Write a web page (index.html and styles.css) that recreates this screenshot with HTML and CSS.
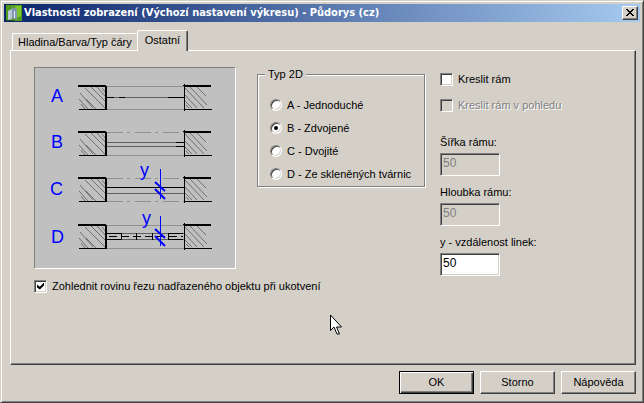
FILE: index.html
```html
<!DOCTYPE html>
<html lang="cs">
<head>
  <meta charset="UTF-8" />
  <meta name="viewport" content="width=device-width, initial-scale=1.0" />
  <title>Vlastnosti zobrazení</title>
  <link rel="stylesheet" href="styles.css">
</head>
<body>
<form class="window">
  <header class="titlebar">
    <svg class="app-icon" viewBox="0 0 16 16" width="16" height="16" aria-hidden="true">
      <rect width="16" height="16" fill="#4f9a1c"/>
      <path d="M9 1h6v10l-4 2z" fill="#7cc62c"/>
      <path d="M2 6l4-2v10l-4 1z" fill="#b9c9da"/>
      <path d="M6 2l5 2v11l-5-2z" fill="#7f95ad"/>
      <path d="M8 6l1 .5v7L8 13z" fill="#e4edf4"/>
      <path d="M0 15h6l4 1H0z" fill="#24502a"/>
    </svg>
    <h1>Vlastnosti zobrazení (Výchozí nastavení výkresu) - Půdorys (cz)</h1>
    <button type="button" class="close" aria-label="Zavřít">
      <svg viewBox="0 0 8 7" width="8" height="7" shape-rendering="crispEdges"><path d="M0 0h2v1h1v1h2V1h1V0h2v1H7v1H6v1H5v1h1v1h1v1h1v1H6V6H5V5H3v1H2v1H0V6h1V5h1V4h1V3H2V2H1V1H0z"/></svg>
    </button>
  </header>

  <nav class="tabs" role="tablist">
    <button type="button" class="tab" role="tab" aria-selected="false">Hladina/Barva/Typ čáry</button>
    <button type="button" class="tab active" role="tab" aria-selected="true">Ostatní</button>
  </nav>

  <main class="panel" role="tabpanel">
    <svg class="preview" viewBox="0 0 200 200" width="200" height="200" role="img" aria-label="Typy 2D zobrazení">
      <defs>
        <!-- cut wall on both sides of the opening -->
        <g id="hatchLeft" class="hatch">
          <path d="M45 7l13 15M44 13l9 10M46 18l4 5M50 2l20 20M56 1l15 15M62 1l9 10M67 2l4 5M51 13l10 10"/>
        </g>
        <g id="hatchRight" class="hatch">
          <path d="M150 2l19 20M150 9l12 13M150 15l7 7M155 1l17 18M162 1l9 9M151 19l3 3"/>
        </g>
        <g id="walls">
          <use href="#hatchLeft"/>
          <use href="#hatchRight"/>
          <path class="ink thick" d="M43 0h28M148 0h28"/>
          <path class="ink" d="M44 23.500h28M148 23.500h29"/>
          <path class="ink thick" d="M71 0v24"/>
          <path class="ink" d="M149.500 -2v27"/>
        </g>
        <g id="dimension" class="dim">
          <path d="M125.500 0v30" />
          <path class="tick" d="M120 13l10 9M120 20l10 10"/>
        </g>
      </defs>

      <use href="#walls" y="18"/>
      <path class="faint" d="M72 18.500h77M72 41.500h77"/>
      <path class="gray" d="M72 29.500h77"/>
      <path class="ink" d="M72 29.500h7M84 29.500h6M133 29.500h16"/>

      <use href="#walls" y="64"/>
      <path class="faint dashed" d="M72 64.500h77"/>
      <path class="faint" d="M72 87.500h77"/>
      <path class="gray" d="M72 74.500h77M72 78.500h77"/>
      <path class="ink" d="M141 74.500h8M141 78.500h8"/>

      <use href="#walls" y="110"/>
      <path class="faint dashed" d="M72 110.500h77M72 133.500h77"/>
      <path class="ink" d="M72 119.500h77"/>
      <path class="gray" d="M72 125.500h77"/>
      <use href="#dimension" y="101"/>

      <use href="#walls" y="157"/>
      <path class="faint" d="M72 157.500h77M72 180.500h77"/>
      <path class="gray" d="M72 165.500h77M72 171.500h77"/>
      <path class="ink" d="M72 165.500h14M72 171.500h14M134 165.500h14M134 171.500h14M86.500 165v7M101.500 165v7M117.500 165v7M133.500 165v7"/>
      <path class="ink broken" d="M74 168.500h74"/>
      <use href="#dimension" y="148"/>

      <g class="letters">
        <text x="16" y="34">A</text>
        <text x="16" y="80">B</text>
        <text x="15" y="127">C</text>
        <text x="16" y="175">D</text>
        <text x="105" y="108">y</text>
        <text x="107" y="156">y</text>
      </g>
    </svg>

    <fieldset class="types">
      <legend>Typ 2D</legend>
      <label class="option"><input type="radio" name="typ"> A - Jednoduché</label>
      <label class="option"><input type="radio" name="typ" checked> B - Zdvojené</label>
      <label class="option"><input type="radio" name="typ"> C - Dvojité</label>
      <label class="option"><input type="radio" name="typ"> D - Ze skleněných tvárnic</label>
    </fieldset>

    <div class="settings">
      <label class="option"><input type="checkbox"> Kreslit rám</label>
      <label class="option disabled"><input type="checkbox" disabled> Kreslit rám v pohledu</label>
      <div class="fields">
        <div class="field">
          <label for="width">Šířka rámu:</label>
          <input type="text" id="width" value="50" disabled>
        </div>
        <div class="field">
          <label for="depth">Hloubka rámu:</label>
          <input type="text" id="depth" value="50" disabled>
        </div>
        <div class="field">
          <label for="distance">y - vzdálenost linek:</label>
          <input type="text" id="distance" value="50">
        </div>
      </div>
    </div>

    <label class="option anchor"><input type="checkbox" checked> Zohlednit rovinu řezu nadřazeného objektu při ukotvení</label>
  </main>

  <footer class="actions">
    <button type="submit" class="btn default">OK</button>
    <button type="button" class="btn">Storno</button>
    <button type="button" class="btn">Nápověda</button>
  </footer>

  <svg class="cursor" viewBox="0 0 13 21" width="13" height="21" aria-hidden="true">
    <path d="M.5 1v15.500l3.500-3.500 3 7h2.500l-3-7h5z" fill="#fff" stroke="#000"/>
  </svg>
</form>
</body>
</html>
```

FILE: styles.css
```css
*{box-sizing:border-box;}
html,body{margin:0;height:100%;}
body{background:#d4d0c8;color:#000;font:11px/14px 'Liberation Sans',Arial,sans-serif;}
button,input{font:inherit;color:inherit;}

.window{
  position:relative;display:flex;flex-direction:column;min-height:100%;
  padding:2px 7px 8px 2px;
  border:1px solid;border-color:#d4d0c8 #404040 #404040 #d4d0c8;
  box-shadow:inset 1px 1px #fff,inset -1px -1px #808080;
}

/* title bar */
.titlebar{
  display:flex;align-items:center;gap:2px;height:18px;margin:1px -4px 0 1px;padding:0 2px;
  background:linear-gradient(to right,#0a246a,#a6caf0);
}
.titlebar h1{flex:1;margin:0;color:#fff;font:bold 11px/16px 'DejaVu Sans Condensed','DejaVu Sans',sans-serif;white-space:nowrap;}
.close{
  display:grid;place-items:center;width:16px;height:14px;padding:0 1px 1px 0;background:#d4d0c8;
  border:1px solid;border-color:#fff #404040 #404040 #fff;box-shadow:inset -1px -1px #808080;
}

/* tabs */
.tabs{display:flex;align-items:flex-end;margin-top:8px;padding-left:9px;}
.tab{
  height:17px;padding:0 5px;background:#d4d0c8;white-space:nowrap;
  border:1px solid #fff;border-width:1px 0 0 1px;border-radius:2px 2px 0 0;
}
.tab.active{
  position:relative;height:21px;margin-bottom:-1px;padding:0 7px 2px;
  border-right:1px solid #404040;box-shadow:inset -1px 0 #808080;
}

/* page */
.panel{
  flex:1;display:grid;grid-template-columns:208px 168px 1fr;grid-template-rows:auto 1fr;
  column-gap:15px;row-gap:3px;margin-left:7px;padding:16px 10px 16px 23px;
  border:1px solid;border-color:#fff #404040 #404040 #fff;box-shadow:inset -1px -1px #808080;
}
.preview{
  width:202px;height:202px;background:#c0c0c0;
  border:1px solid;border-color:#808080 #fff #fff #808080;
}
.ink,.gray,.faint,.dim,.hatch{fill:none;stroke:#000;shape-rendering:crispEdges;}
.thick{stroke-width:2;}
.gray{stroke:#606060;}
.faint{stroke:#909090;}
.hatch{stroke:#707070;shape-rendering:auto;}
.dashed{stroke-dasharray:16 4 3 5;}
.broken{stroke-dasharray:8 4;}
.dim{stroke:#00f;}
.tick{stroke-width:2;shape-rendering:auto;}
.letters{fill:#00f;font-size:18px;}

.types{
  display:flex;flex-direction:column;gap:9px;align-self:start;min-width:0;margin:0;padding:17px 12px 5px;
  border:1px solid #808080;box-shadow:1px 1px #fff,inset 1px 1px #fff;
}
.types legend{margin-left:-5px;padding:0 3px;background:#d4d0c8;}

.option{display:flex;align-items:center;gap:5px;height:14px;white-space:nowrap;}
.option input{
  appearance:none;flex:none;display:grid;place-items:center;width:13px;height:13px;margin:0;background:#fff;
  border:1px solid;border-color:#808080 #fff #fff #808080;
  box-shadow:inset 1px 1px #404040,inset -1px -1px #d4d0c8;
}
.option input[type=radio]{width:12px;height:12px;border-radius:50%;}
.option input[type=radio]:checked::before{content:'';width:4px;height:4px;border-radius:50%;background:#000;}
.option input[type=checkbox]:checked::before{
  content:'';width:7px;height:7px;background:#000;
  clip-path:polygon(0 28%,40% 62%,100% 0,100% 42%,40% 100%,0 70%);
}
.option input:disabled{background:#d4d0c8;}
.disabled{color:#808080;text-shadow:1px 1px #fff;}

.settings{display:flex;flex-direction:column;gap:12px;padding-top:5px;}
.fields{display:flex;flex-direction:column;gap:9px;margin-top:11px;}
.field{display:flex;flex-direction:column;gap:4px;}
.field input{
  width:60px;height:23px;padding:0 2px 4px;background:#fff;font-size:12px;
  border:1px solid;border-color:#808080 #fff #fff #808080;
  box-shadow:inset 1px 1px #404040,inset -1px -1px #d4d0c8;
}
.field input:disabled{background:#d4d0c8;color:#808080;}
.anchor{grid-column:1 / -1;}

/* buttons */
.actions{display:flex;justify-content:flex-end;gap:6px;padding-top:6px;}
.btn{
  width:75px;height:23px;padding:0 0 2px;background:#d4d0c8;
  border:1px solid;border-color:#fff #404040 #404040 #fff;box-shadow:inset -1px -1px #808080;
}
.btn.default{border-color:#000;box-shadow:inset 1px 1px #fff,inset -1px -1px #404040,inset -2px -2px #808080;}

.cursor{position:absolute;left:329px;top:313px;}
```
